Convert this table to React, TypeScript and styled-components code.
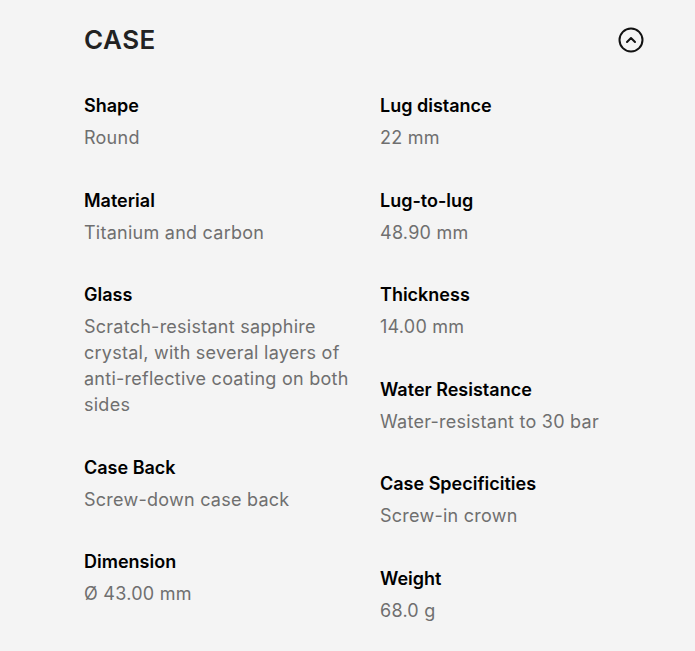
import React from "react";
import styled, { createGlobalStyle } from "styled-components";

const Global = createGlobalStyle`
  body {
    margin: 0;
    background: #f4f4f4;
    font-family: Inter, "Noto Sans", sans-serif;
  }
`;

const Wrapper = styled.section`
  width: 695px;
  height: 651px;
  box-sizing: border-box;
  padding: 15px 51px 0 84px;
  background: #f4f4f4;
  overflow: hidden;
`;

const Header = styled.div`
  display: flex;
  justify-content: space-between;
  align-items: center;
  height: 48px;
  h2 {
    margin: 0;
    font-size: 26px;
    font-weight: 600;
    color: #222;
    letter-spacing: 0.5px;
  }
`;

const ToggleBtn = styled.button`
  width: 26px;
  height: 26px;
  margin-top: 2px;
  padding: 0;
  border: none;
  background: none;
  display: flex;
  align-items: center;
  justify-content: center;
  cursor: pointer;
`;

const Grid = styled.div`
  margin-top: 31px;
  display: grid;
  grid-template-columns: 272px 264px;
  column-gap: 24px;
`;

const Column = styled.div`
  display: flex;
  flex-flow: column;
  gap: 37.6px;
`;

const Item = styled.div`
  display: flex;
  flex-flow: column;
  gap: 7px;
  h4 {
    margin: 0;
    font-size: 18px;
    line-height: 24px;
    font-weight: 600;
    color: #000;
  }
  p {
    margin: 0;
    font-size: 18px;
    line-height: 26px;
    letter-spacing: 0.25px;
    color: #6f6f6f;
  }
`;

const left = [
  ["Shape", "Round"],
  ["Material", "Titanium and carbon"],
  [
    "Glass",
    "Scratch-resistant sapphire crystal, with several layers of anti-reflective coating on both sides",
  ],
  ["Case Back", "Screw-down case back"],
  ["Dimension", "Ø 43.00 mm"],
];

const right = [
  ["Lug distance", "22 mm"],
  ["Lug-to-lug", "48.90 mm"],
  ["Thickness", "14.00 mm"],
  ["Water Resistance", "Water-resistant to 30 bar"],
  ["Case Specificities", "Screw-in crown"],
  ["Weight", "68.0 g"],
];

const Spec = ({ label, value }: { label: string; value: string }) => (
  <Item>
    <h4>{label}</h4>
    <p>{value}</p>
  </Item>
);

const App = () => {
  return (
    <>
      <Global />
      <Wrapper>
        <Header>
          <h2>CASE</h2>
          <ToggleBtn aria-label="collapse">
            <svg width="26" height="26" viewBox="0 0 26 26" fill="none">
              <circle cx="13" cy="13" r="11.5" stroke="#111" strokeWidth="2" />
              <path
                d="M9 15l4-4 4 4"
                stroke="#111"
                strokeWidth="2"
                strokeLinecap="round"
                strokeLinejoin="round"
              />
            </svg>
          </ToggleBtn>
        </Header>
        <Grid>
          <Column>
            {left.map(([l, v]) => (
              <Spec key={l} label={l} value={v} />
            ))}
          </Column>
          <Column>
            {right.map(([l, v]) => (
              <Spec key={l} label={l} value={v} />
            ))}
          </Column>
        </Grid>
      </Wrapper>
    </>
  );
};

export default App;
